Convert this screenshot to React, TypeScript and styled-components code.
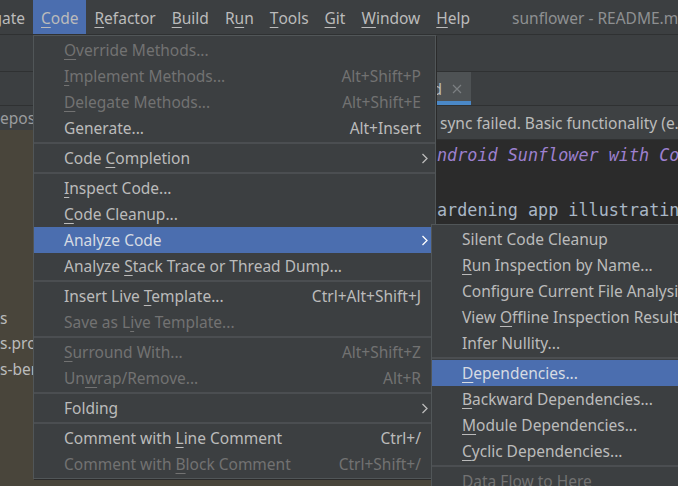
import React from 'react';
import styled, { createGlobalStyle } from 'styled-components';

const GlobalStyle = createGlobalStyle`
  html, body { margin: 0; padding: 0; background: #3c3f41; }
  #root { width: 678px; height: 486px; }
`;

const UI_FONT = `"Noto Sans", "Open Sans", sans-serif`;

const Screen = styled.div`
  position: relative;
  width: 678px;
  height: 486px;
  overflow: hidden;
  background: #3c3f41;
  display: flex;
  flex-direction: column;
  font-family: ${UI_FONT};
  font-size: 15.5px;
  color: #bbbbbb;
`;

/* ---------- menu bar ---------- */
const MenuBar = styled.div`
  height: 34px;
  flex: none;
  display: flex;
  align-items: stretch;
  border-bottom: 1px solid #2f3132;
  white-space: nowrap;
  overflow: hidden;
`;

const BarItem = styled.div<{ $active?: boolean }>`
  flex: none;
  display: flex;
  align-items: center;
  padding: 1px 8px 0;
  background: ${(p) => (p.$active ? '#4b6eaf' : 'transparent')};
`;

const ClippedBarItem = styled(BarItem)`
  width: 33px;
  box-sizing: border-box;
  justify-content: flex-end;
  overflow: hidden;
  padding: 1px 8px 0 0;
`;

const Title = styled.div`
  flex: none;
  display: flex;
  align-items: center;
  padding-top: 1px;
  margin-left: 34px;
  color: #8e9092;
`;

const Mn = styled.span`
  text-decoration: underline;
  text-underline-offset: 3px;
  text-decoration-thickness: 1px;
`;

function Label({ text, m }: { text: string; m?: number }) {
  if (m === undefined || m < 0) return <>{text}</>;
  return (
    <>
      {text.slice(0, m)}
      <Mn>{text[m]}</Mn>
      {text.slice(m + 1)}
    </>
  );
}

/* ---------- background IDE ---------- */
const Toolbar = styled.div`
  height: 36px;
  flex: none;
  border-bottom: 1px solid #2f3132;
`;

const Workspace = styled.div`
  flex: 1;
  display: flex;
  min-height: 0;
`;

const ProjectPanel = styled.div`
  width: 435px;
  flex: none;
  display: flex;
  flex-direction: column;
`;

const PanelHeader = styled.div`
  height: 33px;
  flex: none;
  border-bottom: 1px solid #2f3132;
`;

const RepoRow = styled.div`
  height: 24px;
  flex: none;
  display: flex;
  align-items: center;
  white-space: nowrap;
  overflow: hidden;
  color: #9a9c9e;
`;

const Tree = styled.div`
  flex: 1;
  background: #49453b;
  padding-top: 22px;
  display: flex;
  flex-direction: column;
`;

const TreeRow = styled.div<{ $indent: number }>`
  height: 25.5px;
  flex: none;
  display: flex;
  align-items: center;
  padding-left: ${(p) => p.$indent}px;
  white-space: nowrap;
  color: #bbbbbb;
`;

const EditorArea = styled.div`
  flex: 1;
  display: flex;
  flex-direction: column;
  min-width: 0;
`;

const TabRow = styled.div`
  height: 33px;
  flex: none;
  display: flex;
  border-bottom: 1px solid #2f3132;
`;

const Tab = styled.div`
  margin-left: 2px;
  width: 34px;
  box-sizing: border-box;
  display: flex;
  align-items: center;
  justify-content: flex-end;
  gap: 10px;
  padding-right: 9px;
  overflow: hidden;
  white-space: nowrap;
  background: #4e5254;
  border-bottom: 4px solid #4a88c7;
  padding-top: 4px;
`;

const NotifBar = styled.div`
  height: 33px;
  flex: none;
  display: flex;
  align-items: center;
  padding-left: 5px;
  white-space: nowrap;
  overflow: hidden;
  background: #3e4143;
  border-bottom: 1px solid #2f3132;
`;

const Editor = styled.div`
  flex: 1;
  background: #2b2b2b;
  padding: 2px 0 0 2px;
  font-family: "DejaVu Sans Mono", "Liberation Mono", monospace;
  font-size: 16.8px;
  line-height: 27.5px;
  white-space: pre;
  overflow: hidden;
`;

const CodeLine = styled.div<{ $heading?: boolean }>`
  color: ${(p) => (p.$heading ? '#9d80cf' : '#a9b7c6')};
  font-style: ${(p) => (p.$heading ? 'italic' : 'normal')};
  height: 27.5px;
`;

/* ---------- popup menus ---------- */
const Popup = styled.div<{ $left: number; $top: number; $width: number }>`
  position: absolute;
  left: ${(p) => p.$left}px;
  top: ${(p) => p.$top}px;
  width: ${(p) => p.$width}px;
  box-sizing: border-box;
  background: #3c3f41;
  border: 1px solid #515658;
  padding: 1px 0;
  display: flex;
  flex-direction: column;
  white-space: nowrap;
  box-shadow: 1px 1px 0 #2b2b2b;
`;

const Row = styled.div<{ $selected?: boolean; $disabled?: boolean }>`
  height: 26px;
  flex: none;
  display: flex;
  align-items: center;
  padding: 0 14px 0 30px;
  background: ${(p) => (p.$selected ? '#4b6eaf' : 'transparent')};
  color: ${(p) => (p.$disabled ? '#727272' : p.$selected ? '#d6dbe3' : '#bbbbbb')};
`;

const RowLabel = styled.span`
  flex: 1;
`;

const Shortcut = styled.span`
  margin-left: 20px;
`;

const Arrow = styled.svg`
  width: 7px;
  height: 11px;
  margin-right: -7px;
`;

const Separator = styled.div`
  height: 4px;
  flex: none;
  display: flex;
  align-items: center;
  &::before {
    content: '';
    flex: 1;
    height: 2px;
    background: #4b4e51;
  }
`;

type Item =
  | { sep: true }
  | {
      sep?: false;
      text: string;
      m?: number;
      shortcut?: string;
      disabled?: boolean;
      sub?: boolean;
      selected?: boolean;
    };

const codeMenu: Item[] = [
  { text: 'Override Methods...', m: 0, disabled: true },
  { text: 'Implement Methods...', m: 0, disabled: true, shortcut: 'Alt+Shift+P' },
  { text: 'Delegate Methods...', m: 0, disabled: true, shortcut: 'Alt+Shift+E' },
  { text: 'Generate...', shortcut: 'Alt+Insert' },
  { sep: true },
  { text: 'Code Completion', m: 5, sub: true },
  { sep: true },
  { text: 'Inspect Code...', m: 0 },
  { text: 'Code Cleanup...', m: 0 },
  { text: 'Analyze Code', sub: true, selected: true },
  { text: 'Analyze Stack Trace or Thread Dump...', m: 8 },
  { sep: true },
  { text: 'Insert Live Template...', m: 12, shortcut: 'Ctrl+Alt+Shift+J' },
  { text: 'Save as Live Template...', m: 9, disabled: true },
  { sep: true },
  { text: 'Surround With...', m: 0, disabled: true, shortcut: 'Alt+Shift+Z' },
  { text: 'Unwrap/Remove...', m: 2, disabled: true, shortcut: 'Alt+R' },
  { sep: true },
  { text: 'Folding', sub: true },
  { sep: true },
  { text: 'Comment with Line Comment', m: 13, shortcut: 'Ctrl+/' },
  { text: 'Comment with Block Comment', m: 13, disabled: true, shortcut: 'Ctrl+Shift+/' },
];

const analyzeMenu: Item[] = [
  { text: 'Silent Code Cleanup' },
  { text: 'Run Inspection by Name...', m: 0 },
  { text: 'Configure Current File Analysis...' },
  { text: 'View Offline Inspection Results...', m: 5 },
  { text: 'Infer Nullity...' },
  { sep: true },
  { text: 'Dependencies...', m: 0, selected: true },
  { text: 'Backward Dependencies...', m: 0 },
  { text: 'Module Dependencies...', m: 0 },
  { text: 'Cyclic Dependencies...', m: 0 },
  { sep: true },
  { text: 'Data Flow to Here', disabled: true },
];

function MenuList({ items }: { items: Item[] }) {
  return (
    <>
      {items.map((it, i) =>
        it.sep ? (
          <Separator key={i} />
        ) : (
          <Row key={i} $selected={it.selected} $disabled={it.disabled}>
            <RowLabel>
              <Label text={it.text} m={it.m} />
            </RowLabel>
            {it.shortcut && <Shortcut>{it.shortcut}</Shortcut>}
            {it.sub && (
              <Arrow viewBox="0 0 7 11">
                <polyline
                  points="1.5,1 6,5.5 1.5,10"
                  fill="none"
                  stroke={it.selected ? '#ffffff' : '#bbbbbb'}
                  strokeWidth="1.3"
                />
              </Arrow>
            )}
          </Row>
        )
      )}
    </>
  );
}

const CloseIcon = styled.svg`
  width: 10px;
  height: 10px;
  flex: none;
`;

const barItems = [
  { text: 'Code', m: 0, active: true },
  { text: 'Refactor', m: 0 },
  { text: 'Build', m: 0 },
  { text: 'Run', m: 1 },
  { text: 'Tools', m: 0 },
  { text: 'Git', m: 0 },
  { text: 'Window', m: 0 },
  { text: 'Help', m: 0 },
];

const treeRows = [
  { text: 'app', indent: 60 },
  { text: 'build.gradle', indent: 60 },
  { text: 'docs', indent: 60 },
  { text: 'gradle', indent: 60 },
  { text: 'screenshots', indent: 60 },
  { text: '.gitignore', indent: 60 },
  { text: 's', indent: 0 },
  { text: 's.pro', indent: 0 },
  { text: 's-ber', indent: 0 },
];

export default function App() {
  return (
    <Screen>
      <GlobalStyle />
      <MenuBar>
        <ClippedBarItem>Navigate</ClippedBarItem>
        {barItems.map((b) => (
          <BarItem key={b.text} $active={b.active}>
            <Label text={b.text} m={b.m} />
          </BarItem>
        ))}
        <Title>sunflower - README.md</Title>
      </MenuBar>
      <Toolbar />
      <Workspace>
        <ProjectPanel>
          <PanelHeader />
          <RepoRow>epos</RepoRow>
          <Tree>
            {treeRows.map((r, i) => (
              <TreeRow key={i} $indent={r.indent}>
                {r.text}
              </TreeRow>
            ))}
          </Tree>
        </ProjectPanel>
        <EditorArea>
          <TabRow>
            <Tab>
              <span>README.md</span>
              <CloseIcon viewBox="0 0 10 10">
                <path d="M1 1L9 9M9 1L1 9" stroke="#7b7f82" strokeWidth="1.2" />
              </CloseIcon>
            </Tab>
          </TabRow>
          <NotifBar>sync failed. Basic functionality (e.g. editing, debugging) will not work properly.</NotifBar>
          <Editor>
            <CodeLine $heading>ndroid Sunflower with Compose</CodeLine>
            <CodeLine />
            <CodeLine>ardening app illustrating Android development best practices</CodeLine>
          </Editor>
        </EditorArea>
      </Workspace>

      <Popup $left={33} $top={35} $width={403}>
        <MenuList items={codeMenu} />
      </Popup>
      <Popup $left={431} $top={224} $width={300}>
        <MenuList items={analyzeMenu} />
      </Popup>
    </Screen>
  );
}
